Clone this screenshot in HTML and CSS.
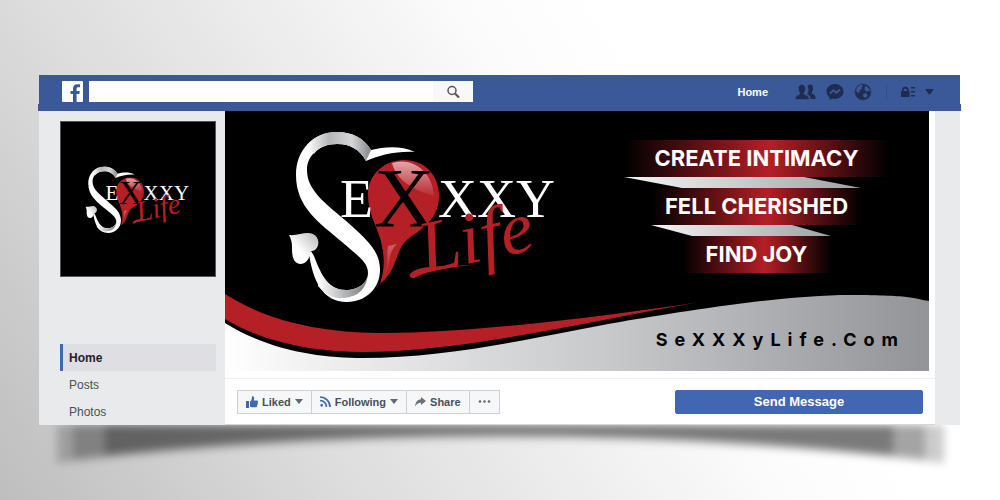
FILE: index.html
```
<!DOCTYPE html>
<html lang="en">
<head>
    <meta charset="UTF-8">
    <meta name="viewport" content="width=device-width, initial-scale=1.0">
    <title>SeXXXy Life</title>
    <link rel="stylesheet" href="styles.css">
</head>
<body>
    <!-- Logo shared by the profile picture and the cover -->
    <svg class="defs" width="0" height="0" aria-hidden="true">
        <defs>
            <linearGradient id="silverTop" x1="0" y1="0" x2="1" y2="0">
                <stop offset="0" stop-color="#fff"/>
                <stop offset="0.35" stop-color="#b5b6b8"/>
                <stop offset="0.7" stop-color="#d5d6d7"/>
                <stop offset="1" stop-color="#85868a"/>
            </linearGradient>
            <linearGradient id="silverBottom" x1="0" y1="0" x2="1" y2="0">
                <stop offset="0" stop-color="#fff"/>
                <stop offset="0.5" stop-color="#b9babc"/>
                <stop offset="1" stop-color="#77787b"/>
            </linearGradient>
            <linearGradient id="heart" x1="0" y1="1" x2="1" y2="0">
                <stop offset="0.4" stop-color="#fff"/>
                <stop offset="1" stop-color="#b5b6b8"/>
            </linearGradient>
            <linearGradient id="shine" x1="0" y1="0" x2="0" y2="1">
                <stop offset="0" stop-color="#fff" stop-opacity="0.6"/>
                <stop offset="1" stop-color="#fff" stop-opacity="0.05"/>
            </linearGradient>
            <symbol id="logo" viewBox="0 0 290 190">
                <path fill="#fff" d="M135 32C120 25 104 27 91 30C84 18 72 12 57 12C33 12 16 30 16 55C16 88 40 103 62 122C78 136 88 142 88 153C88 163 78 170 66 170C50 170 42 158 34 136L31 131L29 134C33 160 42 182 67 182C86 182 100 168 100 150C100 130 86 119 65 100C44 82 27 70 27 50C27 35 40 24 57 24C71 24 80 30 86 41C100 35 116 31 135 32Z"/>
                <path fill="url(#silverTop)" d="M91 30C84 18 72 12 57 12C44 12 34 17 27 25L34 34C39 27 47 24 57 24C71 24 80 30 86 41Z"/>
                <path fill="url(#silverBottom)" d="M88 150C89 163 78 170 66 170C52 170 45 162 39 150L38 166C45 174 53 179 63 178C79 177 88 168 88 150Z"/>
                <path fill="url(#heart)" d="M9 115C18 116 26 111 33 114C39 117 40 124 36 129C34 131 32 131 31 131C30 137 27 144 20 144C12 143 12 133 12 127C12 122 11 119 9 115Z"/>
                <path fill="#b51f26" d="M124 40C145 40 160 56 159 78C158 100 140 110 128 119C115 129 118 150 100 164C106 146 104 130 99 115C95 103 88 92 88 74C88 55 104 40 124 40Z"/>
                <path fill="url(#shine)" d="M112 43C130 37 152 49 154 76C146 74 118 66 112 43Z"/>
                <path fill="url(#shine)" opacity="0.5" d="M117 124C106 134 112 146 103 158C110 146 106 134 108 126Z"/>
                <text class="logo-caps" x="60" y="97" fill="#fff">E</text>
                <text class="logo-x" x="94" y="107">X</text>
                <text class="logo-caps" x="158" y="97" fill="#fff">XXY</text>
                <g transform="rotate(-12 140 152)">
                    <text class="logo-script" x="144" y="154">Life</text>
                </g>
                <path fill="#b51f26" d="M130 154C140 144 158 148 200 144C172 147 148 150 134 158C130 158 129 156 130 154Z"/>
            </symbol>
        </defs>
    </svg>

    <div class="page">
        <div class="card">
            <div class="topbar">
                <a class="fb" href="#" aria-label="Facebook">
                    <svg width="21" height="21" viewBox="0 0 21 21">
                        <rect width="21" height="21" rx="1" fill="#fff"/>
                        <path fill="#3b5998" d="M11 21v-8H8.500v-3H11V8c0-3 1.500-4.700 4.400-4.700H18v3h-1.800c-1.300 0-1.600.6-1.600 1.800V10h3.200l-.5 3h-2.700v8z"/>
                    </svg>
                </a>
                <form class="search">
                    <input type="text" aria-label="Search">
                    <button type="button" aria-label="Search">
                        <svg width="14" height="14" viewBox="0 0 14 14" fill="none" stroke="#555" stroke-width="1.500">
                            <circle cx="6" cy="5.500" r="4"/>
                            <path stroke-width="2.200" d="M9 8.500l4 4"/>
                        </svg>
                    </button>
                </form>
                <div class="topnav">
                    <a class="home" href="#">Home</a>
                    <a href="#" aria-label="Friend requests">
                        <svg width="21" height="16" viewBox="0 0 21 16" fill="#1d2c50">
                            <path d="M12.500 2.500C13 1 14 .5 15 .5c2.200 0 3.200 1.700 3.100 4C18 6 17.500 7.500 16.800 8.300v1.500c1.800.8 3.700 1.400 3.700 3.700V15h-5c0-3-1.200-3.800-3.300-4.700 1.700-2 1.800-5.500.3-7.800z"/>
                            <path d="M6.800.5C9.300.5 10.500 2.300 10.400 5c0 1.500-.6 3-1.400 4v1.300c2.200 1 5.300 1.500 5.300 5.200H.3c0-4 2.800-4.200 4.500-5.200V9C4 8 3.400 6.500 3.400 5 3.300 2.300 4.400.5 6.800.5z" stroke="#3b5998" stroke-width=".6"/>
                        </svg>
                    </a>
                    <a href="#" aria-label="Messages">
                        <svg width="18" height="18" viewBox="0 0 18 18">
                            <path fill="#1d2c50" d="M9 1C4.300 1 .5 4.300.5 8.500c0 2.300 1.200 4.300 3 5.700V17l2.800-1.500c.9.300 1.700.4 2.700.4 4.700 0 8.500-3.300 8.500-7.400S13.700 1 9 1z"/>
                            <path fill="none" stroke="#3b5998" stroke-width="1.800" d="M4 10.500l3.500-3.300 2.700 2.500L14 6.500"/>
                        </svg>
                    </a>
                    <a href="#" aria-label="Notifications">
                        <svg width="18" height="18" viewBox="0 0 18 18">
                            <circle cx="9" cy="9" r="8" fill="#1d2c50" stroke="#273c6d"/>
                            <path fill="#3b5998" d="M2 7C3 4 5 2 8 1.700L9 3 7.500 4.500 8 6 5.500 7 6 9 3.500 10zM11 2.500L15.500 6l.5 3-2-1.500-1 1.500-2.500-2zM9 11l3-1 1.500 2-1.500 3-2.500-1z"/>
                        </svg>
                    </a>
                    <span class="divider"></span>
                    <a href="#" aria-label="Privacy">
                        <svg width="14" height="12" viewBox="0 0 14 12" fill="#1d2c50">
                            <path fill-rule="evenodd" d="M0 5h1V4a3.300 3.300 0 0 1 6.600 0v1h1v6H0zM2.700 5h3.200V4a1.600 1.600 0 0 0-3.200 0z"/>
                            <path d="M10 1h4v1.500h-4zM10 5h4v1.500h-4zM10 9h4v1.500h-4z"/>
                        </svg>
                    </a>
                    <a href="#" aria-label="Account menu">
                        <svg width="9" height="6" viewBox="0 0 9 6"><path fill="#1d2c50" d="M0 0h9L4.500 6z"/></svg>
                    </a>
                </div>
            </div>

            <div class="content">
                <div class="sidebar">
                    <div class="profile">
                        <svg width="113" height="74" role="img" aria-label="SeXXXy Life"><use href="#logo"/></svg>
                    </div>
                    <nav class="menu">
                        <a class="active" href="#">Home</a>
                        <a href="#">Posts</a>
                        <a href="#">Photos</a>
                    </nav>
                </div>

                <div class="main">
                    <div class="cover">
                        <svg class="wave" viewBox="0 0 704 260" preserveAspectRatio="none" aria-hidden="true">
                            <defs>
                                <linearGradient id="floor" x1="0" y1="0" x2="1" y2="0">
                                    <stop offset="0" stop-color="#fff"/>
                                    <stop offset="0.12" stop-color="#f1f1f2"/>
                                    <stop offset="0.55" stop-color="#c7c8ca"/>
                                    <stop offset="1" stop-color="#939498"/>
                                </linearGradient>
                            </defs>
                            <path fill="url(#floor)" d="M0 212C45 240 95 247 138 247C230 247 330 222 395 211S560 184 625 184S690 188 704 190V260H0Z"/>
                            <path fill="#b51f26" d="M0 183C50 215 110 222 160 222C240 222 370 207 475 191C370 209 240 241 138 241C90 241 40 232 0 208Z"/>
                        </svg>
                        <svg class="cover-logo" width="290" height="190" role="img" aria-label="SeXXXy Life"><use href="#logo"/></svg>
                        <div class="pitch">
                            <div class="ribbons">
                                <div class="ribbon">CREATE INTIMACY</div>
                                <svg width="265" height="11" viewBox="0 0 265 11" aria-hidden="true">
                                    <linearGradient id="fold" x1="0" y1="0" x2="1" y2="0">
                                        <stop offset="0" stop-color="#f5f5f5"/>
                                        <stop offset="1" stop-color="#a0a1a3"/>
                                    </linearGradient>
                                    <path fill="url(#fold)" d="M0 0H180L237 11H58Z"/>
                                </svg>
                                <div class="ribbon medium">FELL CHERISHED</div>
                                <svg width="265" height="11" viewBox="0 0 265 11" aria-hidden="true">
                                    <path fill="url(#fold)" d="M27 0H168L207 11H68Z"/>
                                </svg>
                                <div class="ribbon short">FIND JOY</div>
                            </div>
                            <div class="site">SeXXXyLife.Com</div>
                        </div>
                    </div>

                    <div class="actions">
                        <div class="group">
                            <button type="button">
                                <svg width="12" height="12" viewBox="0 0 12 12" fill="#4267b2"><path d="M0 5h3v7H0zM4 5.500C5.500 4.500 6 3 6 .5c2-.8 2.700 1.500 1.700 4H11c1 0 1.300 1 .6 1.700.6.600.4 1.400-.2 1.700.4.600.2 1.400-.4 1.700.2.900-.2 1.700-1.200 1.700H6c-.9 0-1.300-.4-2-.7z"/></svg>
                                Liked
                                <svg width="8" height="5" viewBox="0 0 8 5"><path fill="#606770" d="M0 0h8L4 5z"/></svg>
                            </button>
                            <button type="button">
                                <svg width="11" height="11" viewBox="0 0 11 11" fill="none" stroke="#4267b2" stroke-width="1.700">
                                    <circle cx="1.700" cy="9.300" r="1" fill="#4267b2" stroke-width="1"/>
                                    <path d="M0 4.500A6.500 6.500 0 0 1 6.500 11M0 1A10 10 0 0 1 10 11"/>
                                </svg>
                                Following
                                <svg width="8" height="5" viewBox="0 0 8 5"><path fill="#606770" d="M0 0h8L4 5z"/></svg>
                            </button>
                            <button type="button">
                                <svg width="11" height="10" viewBox="0 0 11 10"><path fill="#6d7178" d="M6 0l5 4-5 4V5.800C3.500 5.700 1.500 6.800.3 9.500 0 5.500 2.500 2.500 6 2.300z"/></svg>
                                Share
                            </button>
                            <button type="button" aria-label="More">
                                <svg width="13" height="3" viewBox="0 0 13 3" fill="#606770"><circle cx="2" cy="1.500" r="1.300"/><circle cx="6.500" cy="1.500" r="1.300"/><circle cx="11" cy="1.500" r="1.300"/></svg>
                            </button>
                        </div>
                        <button class="send" type="button">Send Message</button>
                    </div>
                </div>
            </div>
        </div>

        <svg class="shadow" viewBox="0 0 921 60" preserveAspectRatio="none" aria-hidden="true">
            <path fill="#000" fill-opacity="0.2" d="M18 -20H905V38Q460 -12 18 38Z"/>
            <path fill="#000" fill-opacity="0.2" d="M34 -20H886V34Q460 -12 34 34Z"/>
            <path fill="#000" fill-opacity="0.26" d="M66 -20H854V30Q460 -14 66 30Z"/>
        </svg>
    </div>
</body>
</html>
```
FILE: styles.css
```
* {
    box-sizing: border-box;
}
body {
    margin: 0;
    min-height: 100vh;
    font-family: "Liberation Sans", Arial, sans-serif;
    font-size: 12px;
    color: #4b4f56;
    background: linear-gradient(57deg, #bebebe 0%, #dcdcdc 26%, #f0f0f0 47%, #fcfcfc 60%, #ffffff 70%);
}
a {
    color: inherit;
    text-decoration: none;
}
button {
    font-family: inherit;
    cursor: pointer;
}
svg {
    display: block;
    flex-shrink: 0;
}
.defs {
    position: absolute;
}
.page {
    padding: 75px 40px 0 39px;
}
.card {
    position: relative;
    z-index: 1;
    background-color: #e9eaec;
}

/* Top bar */
.topbar {
    position: relative;
    display: flex;
    align-items: center;
    height: 36px;
    padding: 0 26px 3px 23px;
    background-color: #3b5998;
}
.topbar::after {
    content: "";
    position: absolute;
    left: -1px;
    right: -1px;
    bottom: 0;
    height: 7px;
    background-color: #3b5998;
}
.fb {
    margin-right: 6px;
}
.search {
    display: flex;
    width: 384px;
    height: 21px;
}
.search input {
    flex: 1;
    min-width: 0;
    padding: 0 6px;
    border: none;
    background-color: #fff;
}
.search button {
    display: flex;
    align-items: center;
    justify-content: center;
    width: 40px;
    padding: 0;
    border: none;
    background-color: #f8f8f9;
}
.topnav {
    display: flex;
    align-items: center;
    gap: 10px;
    margin-left: auto;
}
.home {
    margin-right: 17px;
    color: #fff;
    font-size: 11px;
    font-weight: bold;
}
.divider {
    width: 1px;
    height: 16px;
    margin: 0 4px;
    background-color: #344e86;
}

/* Left column */
.content {
    display: flex;
}
.sidebar {
    width: 186px;
    flex-shrink: 0;
    padding: 10px 9px 0 21px;
}
.profile {
    display: flex;
    align-items: center;
    justify-content: center;
    height: 156px;
    border: 1px solid #555;
    background-color: #000;
}
.menu {
    display: flex;
    flex-direction: column;
    margin-top: 67px;
}
.menu a {
    height: 27px;
    padding-left: 9px;
    line-height: 29px;
}
.menu a.active {
    padding-left: 6px;
    border-left: 3px solid #4267b2;
    background-color: #dedee3;
    color: #1d2129;
    font-weight: bold;
}

/* Cover */
.main {
    flex: 1;
    min-width: 0;
    margin-right: 25px;
    background-color: #fff;
}
.cover {
    position: relative;
    display: flex;
    justify-content: space-between;
    height: 260px;
    margin-right: 6px;
    background-color: #000;
}
.wave {
    position: absolute;
    width: 100%;
    height: 100%;
}
.cover-logo {
    position: relative;
    margin: 9px 0 0 55px;
}
.pitch {
    position: relative;
    display: flex;
    flex-direction: column;
    justify-content: space-between;
    padding: 29px 24px 20px 0;
}
.ribbons {
    display: flex;
    flex-direction: column;
    align-items: center;
    width: 265px;
    margin-right: 16px;
}
.ribbon {
    width: 100%;
    line-height: 37px;
    background: linear-gradient(90deg, #000 0%, #b51f26 55%, #000 100%);
    color: #fff;
    font-family: Inter, sans-serif;
    font-size: 22px;
    font-weight: bold;
    text-align: center;
    white-space: nowrap;
}
.ribbon.medium {
    width: 210px;
}
.ribbon.short {
    width: 150px;
}
.site {
    align-self: flex-end;
    color: #000;
    font-family: Inter, sans-serif;
    font-size: 18px;
    font-weight: bold;
    line-height: 22px;
    letter-spacing: 7px;
}
.logo-caps,
.logo-x {
    font-family: "Liberation Serif", serif;
    font-size: 54px;
}
.logo-x {
    font-size: 84px;
}
.logo-script {
    font-family: "Liberation Serif", serif;
    font-size: 74px;
    font-style: italic;
    fill: #b51f26;
}

/* Buttons below the cover */
.actions {
    display: flex;
    align-items: center;
    justify-content: space-between;
    margin-top: 7px;
    height: 47px;
    padding: 0 12px;
    border-top: 1px solid #f0f0f1;
    border-bottom: 1px solid #d5d6d8;
}
.group {
    display: flex;
}
.group button {
    display: flex;
    align-items: center;
    gap: 4px;
    height: 24px;
    padding: 0 8px;
    border: 1px solid #ced0d4;
    background-color: #f6f7f9;
    color: #4b4f56;
    font-size: 11px;
    font-weight: bold;
}
.group button + button {
    margin-left: -1px;
}
.send {
    width: 248px;
    height: 24px;
    border: 1px solid #4267b2;
    border-radius: 2px;
    background-color: #4267b2;
    color: #fff;
    font-size: 13px;
    font-weight: bold;
}

/* Curved shadow under the card */
.shadow {
    width: 100%;
    height: 60px;
    filter: blur(4px);
}
```
